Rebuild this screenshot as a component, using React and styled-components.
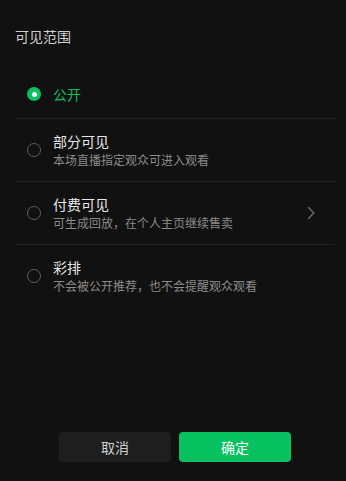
import styled, { createGlobalStyle } from 'styled-components';

const GlobalStyle = createGlobalStyle`
  html, body {
    margin: 0;
    padding: 0;
    background: #111111;
  }
  body {
    font-family: "Noto Sans CJK SC", "Noto Sans", sans-serif;
  }
`;

const options = [
  { id: 'public', title: '公开' },
  { id: 'partial', title: '部分可见', desc: '本场直播指定观众可进入观看' },
  { id: 'paid', title: '付费可见', desc: '可生成回放，在个人主页继续售卖', arrow: true },
  { id: 'rehearsal', title: '彩排', desc: '不会被公开推荐，也不会提醒观众观看' },
];

const Radio = ({ checked }) => (
  <RadioBox $checked={checked}>{checked && <RadioDot />}</RadioBox>
);

const Chevron = () => (
  <svg width='8' height='14' viewBox='0 0 8 14' fill='none'>
    <path d='M1.2 1.2 L6.8 7 L1.2 12.8' stroke='#6b6b6b' strokeWidth='1.4' />
  </svg>
);

const App = () => {
  const selected = 'public';

  return (
    <Page>
      <GlobalStyle />
      <Header>可见范围</Header>

      <List>
        {options.map((opt) => (
          <Row key={opt.id} $compact={!opt.desc}>
            <Radio checked={opt.id === selected} />
            <RowText>
              <RowTitle $active={opt.id === selected}>{opt.title}</RowTitle>
              {opt.desc && <RowDesc>{opt.desc}</RowDesc>}
            </RowText>
            {opt.arrow && <Chevron />}
          </Row>
        ))}
      </List>

      <Footer>
        <Button>取消</Button>
        <Button $primary>确定</Button>
      </Footer>
    </Page>
  );
};

const Page = styled.div`
  height: 481px;
  display: flex;
  flex-direction: column;
  background: #111111;
  box-sizing: border-box;
  padding: 0 11px 19px 15px;
`;

const Header = styled.div`
  padding-top: 26px;
  height: 20px;
  line-height: 20px;
  font-size: 14px;
  color: #cfcfcf;
`;

const List = styled.div`
  margin-top: 24px;
  width: 320px;
`;

const Row = styled.div`
  display: flex;
  align-items: center;
  height: ${(props) => (props.$compact ? '48px' : '62px')};
  padding: 0 20px 0 12px;
  gap: 12px;
  border-bottom: 1px solid #222222;

  &:last-child {
    border-bottom: none;
  }
`;

const RadioBox = styled.div`
  width: 14px;
  height: 14px;
  flex-shrink: 0;
  box-sizing: border-box;
  border-radius: 50%;
  border: ${(props) => (props.$checked ? 'none' : '1.3px solid #5e5e5e')};
  background: ${(props) => (props.$checked ? '#07c160' : 'transparent')};
  display: flex;
  align-items: center;
  justify-content: center;
`;

const RadioDot = styled.div`
  width: 5px;
  height: 5px;
  border-radius: 50%;
  background: #ffffff;
`;

const RowText = styled.div`
  flex: 1;
  display: flex;
  flex-direction: column;
  padding-bottom: 1px;
`;

const RowTitle = styled.div`
  font-size: 14px;
  line-height: 20px;
  color: ${(props) => (props.$active ? '#07c160' : '#e6e6e6')};
`;

const RowDesc = styled.div`
  font-size: 12px;
  line-height: 17px;
  color: #8a8a8a;
`;

const Footer = styled.div`
  margin-top: auto;
  display: flex;
  justify-content: center;
  gap: 8px;
`;

const Button = styled.button`
  width: 112px;
  height: 30px;
  border: none;
  border-radius: 4px;
  font-family: inherit;
  font-size: 14px;
  cursor: pointer;
  background: ${(props) => (props.$primary ? '#07c160' : '#1e1e1e')};
  color: ${(props) => (props.$primary ? '#ffffff' : '#cfcfcf')};
`;

export default App;
